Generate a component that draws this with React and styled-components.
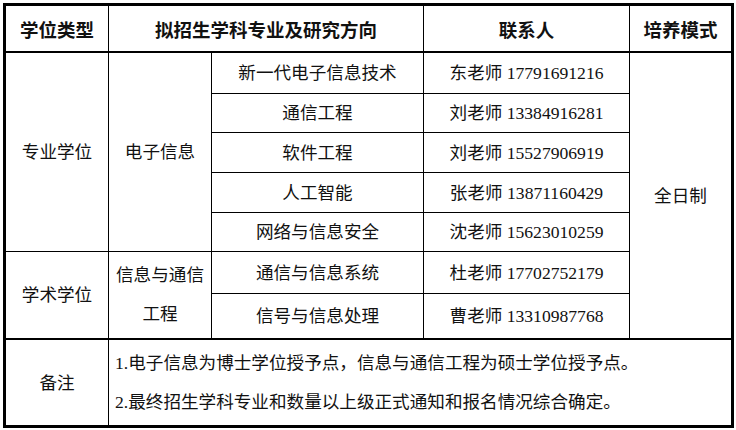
import React from "react";
import styled, { createGlobalStyle } from "styled-components";

const GlobalStyle = createGlobalStyle`
  html, body {
    margin: 0;
    padding: 0;
    background: #fff;
  }
`;

const Page = styled.div`
  padding: 3px 0 0 3px;
  width: 736px;
  height: 430px;
  box-sizing: border-box;
  background: #fff;
`;

const Table = styled.table`
  width: 728px;
  border-collapse: collapse;
  border: 3px solid #000;
  table-layout: fixed;
  font-family: "Liberation Serif", "Noto Sans CJK SC", sans-serif;
  color: #111;
`;

const Th = styled.th`
  border: 1px solid #000;
  border-bottom: 2px solid #000;
  height: 45px;
  padding: 0;
  font-size: 18.5px;
  font-weight: 700;
  text-align: center;
  vertical-align: middle;
`;

const Td = styled.td`
  border: 1px solid #000;
  border-top-width: ${(p) => (p.$thick ? "2px" : "1px")};
  height: ${(p) => p.$h || 39}px;
  padding: 0;
  font-size: 17.6px;
  text-align: center;
  vertical-align: middle;
  line-height: ${(p) => p.$lh || 24}px;
`;

const Note = styled(Td)`
  text-align: left;
  padding-left: 6px;
  line-height: 39px;
`;

const rows = [
  ["新一代电子信息技术", "东老师 17791691216", 40],
  ["通信工程", "刘老师 13384916281", 38],
  ["软件工程", "刘老师 15527906919", 39],
  ["人工智能", "张老师 13871160429", 39],
  ["网络与信息安全", "沈老师 15623010259", 38],
];

export default function App() {
  return (
    <>
      <GlobalStyle />
      <Page>
        <Table>
          <colgroup>
            <col style={{ width: 104 }} />
            <col style={{ width: 103 }} />
            <col style={{ width: 212 }} />
            <col style={{ width: 206 }} />
            <col style={{ width: 103 }} />
          </colgroup>
          <thead>
            <tr>
              <Th>学位类型</Th>
              <Th colSpan={2}>拟招生学科专业及研究方向</Th>
              <Th>联系人</Th>
              <Th>培养模式</Th>
            </tr>
          </thead>
          <tbody>
            {rows.map(([major, contact, h], i) => (
              <tr key={major}>
                {i === 0 && <Td rowSpan={5}>专业学位</Td>}
                {i === 0 && <Td rowSpan={5}>电子信息</Td>}
                <Td $h={h}>{major}</Td>
                <Td $h={h}>{contact}</Td>
                {i === 0 && <Td rowSpan={7}>全日制</Td>}
              </tr>
            ))}
            <tr>
              <Td rowSpan={2}>学术学位</Td>
              <Td rowSpan={2} $lh={39}>
                信息与通信
                <br />
                工程
              </Td>
              <Td $h={41}>通信与信息系统</Td>
              <Td $h={41}>杜老师 17702752179</Td>
            </tr>
            <tr>
              <Td $h={44}>信号与信息处理</Td>
              <Td $h={44}>曹老师 13310987768</Td>
            </tr>
            <tr>
              <Td $thick $h={85}>备注</Td>
              <Note $thick $h={85} colSpan={4}>
                1.电子信息为博士学位授予点，信息与通信工程为硕士学位授予点。
                <br />
                2.最终招生学科专业和数量以上级正式通知和报名情况综合确定。
              </Note>
            </tr>
          </tbody>
        </Table>
      </Page>
    </>
  );
}
